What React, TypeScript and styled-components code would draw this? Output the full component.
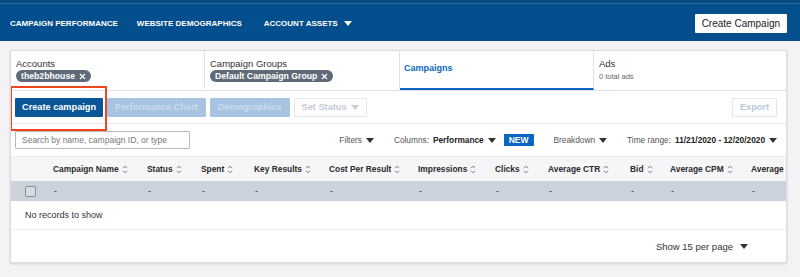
import styled, { createGlobalStyle } from "styled-components";

const GlobalStyle = createGlobalStyle`
  html, body {
    margin: 0;
    padding: 0;
    background: #f3f2f4;
    font-family: "Liberation Sans", Arial, sans-serif;
    color: #222;
  }
  * { box-sizing: border-box; }
`;

const columns = [
  { label: "Campaign Name", width: 94 },
  { label: "Status", width: 54 },
  { label: "Spent", width: 53 },
  { label: "Key Results", width: 75 },
  { label: "Cost Per Result", width: 89 },
  { label: "Impressions", width: 77 },
  { label: "Clicks", width: 53 },
  { label: "Average CTR", width: 82 },
  { label: "Bid", width: 40 },
  { label: "Average CPM", width: 81 },
  { label: "Average CPC", width: 90 },
];

const gridTemplate = `32px ${columns.map((c) => `${c.width}px`).join(" ")}`;

const Caret = ({ color = "currentColor" }: { color?: string }) => (
  <svg width="8" height="5" viewBox="0 0 8 5">
    <path d="M0 0 L8 0 L4 5 Z" fill={color} />
  </svg>
);

const SortIcon = () => (
  <svg width="6" height="9" viewBox="0 0 6 9">
    <path d="M1 3.2 L3 1.2 L5 3.2 M1 5.8 L3 7.8 L5 5.8" fill="none" stroke="#666" strokeWidth="0.9" />
  </svg>
);

const CloseIcon = () => (
  <svg width="7" height="7" viewBox="0 0 7 7">
    <path d="M1 1 L6 6 M6 1 L1 6" stroke="#fff" strokeWidth="1.2" />
  </svg>
);

export default function App() {
  return (
    <>
      <GlobalStyle />
      <TopBar>
        <Nav>
          <NavItem>Campaign Performance</NavItem>
          <NavItem>Website Demographics</NavItem>
          <NavItem>
            Account Assets <Caret color="#fff" />
          </NavItem>
        </Nav>
        <WhiteButton>Create Campaign</WhiteButton>
      </TopBar>

      <Page>
        <Card>
          <Tabs>
            <Tab>
              <TabLabel>Accounts</TabLabel>
              <Chip>
                theb2bhouse <CloseIcon />
              </Chip>
            </Tab>
            <Tab>
              <TabLabel>Campaign Groups</TabLabel>
              <Chip>
                Default Campaign Group <CloseIcon />
              </Chip>
            </Tab>
            <Tab active>
              <ActiveLabel>Campaigns</ActiveLabel>
            </Tab>
            <Tab last>
              <TabLabel>Ads</TabLabel>
              <SubLabel>0 total ads</SubLabel>
            </Tab>
          </Tabs>

          <ActionRow>
            <Highlighted>
              <PrimaryButton>Create campaign</PrimaryButton>
              <Annotation />
            </Highlighted>
            <DisabledButton>Performance Chart</DisabledButton>
            <DisabledButton>Demographics</DisabledButton>
            <OutlineButton>
              Set Status <Caret color="#c3cbd4" />
            </OutlineButton>
            <Spacer />
            <OutlineButton export>Export</OutlineButton>
          </ActionRow>

          <FilterRow>
            <SearchInput placeholder="Search by name, campaign ID, or type" />
            <Spacer />
            <FilterItem>
              Filters <Caret color="#333" />
            </FilterItem>
            <FilterItem>
              Columns: <strong>Performance</strong>
              <Caret color="#333" />
              <NewBadge>NEW</NewBadge>
            </FilterItem>
            <FilterItem>
              Breakdown <Caret color="#333" />
            </FilterItem>
            <FilterItem>
              Time range: <strong>11/21/2020 - 12/20/2020</strong> <Caret color="#333" />
            </FilterItem>
          </FilterRow>

          <TableWrap>
            <HeaderRow>
              <span />
              {columns.map((c) => (
                <HeaderCell key={c.label}>
                  {c.label} <SortIcon />
                </HeaderCell>
              ))}
            </HeaderRow>
            <DataRow>
              <CheckCell>
                <Checkbox />
              </CheckCell>
              {columns.map((c) => (
                <DataCell key={c.label}>-</DataCell>
              ))}
            </DataRow>
          </TableWrap>

          <EmptyRow>No records to show</EmptyRow>

          <Footer>
            Show 15 per page <Caret color="#333" />
          </Footer>
        </Card>
      </Page>
    </>
  );
}

const TopBar = styled.header`
  height: 41px;
  background: #034e8c;
  border-top: 3px solid #0a4a82;
  box-shadow: inset 0 1px 0 #2b6aa0;
  display: flex;
  align-items: center;
  justify-content: space-between;
  padding: 0 13px 0 10px;
`;

const Nav = styled.nav`
  display: flex;
  gap: 19px;
  padding-top: 2px;
`;

const NavItem = styled.span`
  display: flex;
  align-items: center;
  gap: 6px;
  color: #fff;
  font-size: 8px;
  font-weight: 700;
  text-transform: uppercase;
  &:nth-child(2) {
    margin-right: 3px;
  }
`;

const WhiteButton = styled.button`
  height: 19px;
  padding: 0 7px;
  margin-top: 2px;
  border: none;
  border-radius: 1px;
  background: #fff;
  color: #222;
  font-family: inherit;
  font-size: 10px;
`;

const Page = styled.main`
  padding: 9px 13px 15px 10px;
`;

const Card = styled.section`
  background: #fff;
  border: 1px solid #dcdcdf;
  box-shadow: 0 1px 2px rgba(0, 0, 0, 0.15);
  overflow: hidden;
`;

const Tabs = styled.div`
  display: grid;
  grid-template-columns: 194px 195px 194px 1fr;
  height: 40px;
  border-bottom: 1px solid #e2e2e4;
`;

const Tab = styled.div<{ active?: boolean; last?: boolean }>`
  display: flex;
  flex-direction: column;
  justify-content: ${({ active }) => (active ? "center" : "flex-start")};
  padding: ${({ active }) => (active ? "0 4px 2px" : "7px 5px 0")};
  border-right: ${({ last }) => (last ? "none" : "1px solid #e2e2e4")};
  border-bottom: 2px solid ${({ active }) => (active ? "#0a66c2" : "transparent")};
`;

const TabLabel = styled.div`
  font-size: 9.5px;
  color: #333;
  line-height: 11px;
`;

const ActiveLabel = styled(TabLabel)`
  color: #0a66c2;
  font-weight: 600;
  font-size: 9px;
`;

const SubLabel = styled.div`
  font-size: 7.5px;
  color: #666;
  margin-top: 3px;
`;

const Chip = styled.span`
  align-self: flex-start;
  display: inline-flex;
  align-items: center;
  gap: 4px;
  height: 12px;
  margin-top: 1px;
  padding: 0 5px;
  border-radius: 6px;
  background: #5f6b79;
  color: #fff;
  font-size: 8.7px;
  font-weight: 700;
`;

const ActionRow = styled.div`
  display: flex;
  align-items: center;
  gap: 4px;
  height: 33px;
  padding: 0 9px 0 4px;
  border-bottom: 1px solid #e6e6e8;
`;

const Highlighted = styled.div`
  position: relative;
  display: flex;
`;

const Annotation = styled.div`
  position: absolute;
  left: -5px;
  right: -4px;
  top: -12px;
  bottom: -14px;
  border: 2px solid #f0461e;
  pointer-events: none;
`;

const PrimaryButton = styled.button`
  height: 19px;
  padding: 0 7px;
  border: none;
  border-radius: 1px;
  background: #0a5696;
  color: #fff;
  font-family: inherit;
  font-size: 9.2px;
  font-weight: 700;
`;

const DisabledButton = styled(PrimaryButton)`
  background: #a8c4e2;
  color: #c9dbee;
  padding: 0 8px;
`;

const OutlineButton = styled.button<{ export?: boolean }>`
  display: inline-flex;
  align-items: center;
  gap: 4px;
  height: 19px;
  padding: 0 7px;
  background: #fff;
  border: 1px solid #e2e5ea;
  border-radius: 1px;
  color: ${({ export: e }) => (e ? "#b7c8dc" : "#c3cbd4")};
  font-family: inherit;
  font-size: 9.2px;
  font-weight: 700;
`;

const Spacer = styled.div`
  flex: 1;
`;

const FilterRow = styled.div`
  display: flex;
  align-items: center;
  gap: 20px;
  height: 32px;
  padding: 0 9px 0 4px;
`;

const SearchInput = styled.input`
  width: 175px;
  height: 18px;
  padding: 0 6px;
  border: 1px solid #b9b9bd;
  border-radius: 1px;
  font-family: inherit;
  font-size: 8.5px;
  color: #333;
  &::placeholder {
    color: #777;
  }
`;

const FilterItem = styled.span`
  display: inline-flex;
  align-items: center;
  gap: 4px;
  font-size: 8.3px;
  color: #555;
  white-space: nowrap;
  strong {
    color: #222;
    font-weight: 700;
  }
`;

const NewBadge = styled.span`
  margin-left: 4px;
  padding: 1px 5px;
  background: #0a66c2;
  color: #fff;
  font-size: 8.5px;
  font-weight: 700;
`;

const TableWrap = styled.div`
  overflow: hidden;
`;

const HeaderRow = styled.div`
  display: grid;
  grid-template-columns: ${gridTemplate};
  height: 25px;
  align-items: center;
  background: #f6f6f8;
  border-top: 1px solid #ededef;
`;

const HeaderCell = styled.span`
  display: inline-flex;
  align-items: center;
  gap: 3px;
  padding-left: 10px;
  font-size: 8.4px;
  font-weight: 700;
  color: #2a2a2a;
  white-space: nowrap;
`;

const DataRow = styled.div`
  display: grid;
  grid-template-columns: ${gridTemplate};
  height: 20px;
  align-items: center;
  background: #cbd2db;
`;

const CheckCell = styled.span`
  display: flex;
  justify-content: flex-end;
  padding-right: 7px;
`;

const Checkbox = styled.span`
  width: 11px;
  height: 11px;
  border: 1px solid #8a8f96;
  border-radius: 2px;
  background: #d7dce3;
`;

const DataCell = styled.span`
  padding-left: 11px;
  font-size: 9px;
  color: #333;
`;

const EmptyRow = styled.div`
  height: 29px;
  display: flex;
  align-items: center;
  padding-left: 14px;
  font-size: 9px;
  color: #333;
  border-bottom: 1px solid #ececee;
`;

const Footer = styled.div`
  height: 32px;
  display: flex;
  align-items: center;
  justify-content: flex-end;
  gap: 7px;
  padding-right: 38px;
  font-size: 9.5px;
  color: #333;
`;
